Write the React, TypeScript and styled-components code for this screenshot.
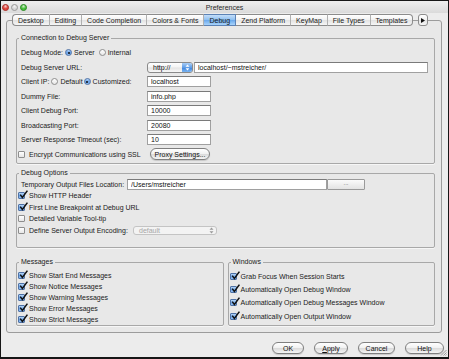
import React from "react";
import styled, { createGlobalStyle } from "styled-components";

const GlobalStyle = createGlobalStyle`
  * { box-sizing: border-box; }
  html, body { margin: 0; padding: 0; background: #ececec; }
  body {
    font-family: "Liberation Sans", Arial, sans-serif;
    font-size: 7px;
    color: #1a1a1a;
  }
`;

const Window = styled.div`
  position: relative;
  width: 449px;
  height: 359px;
  display: flex;
  flex-direction: column;
  background: #ececec;
  border: 1px solid #161616;
  border-bottom-width: 2px;
  overflow: hidden;
`;

const TitleBar = styled.div`
  flex: none;
  height: 12px;
  display: grid;
  grid-template-columns: 1fr auto 1fr;
  align-items: center;
  background: linear-gradient(#eeeeee, #dadada);
  color: #2a2a2a;
`;

const Lights = styled.div`
  display: flex;
  gap: 2px;
  padding-left: 1px;
`;

const Light = styled.span<{ $color: string; $edge: string }>`
  width: 7px;
  height: 7px;
  border-radius: 50%;
  border: 1px solid ${(p) => p.$edge};
  background: radial-gradient(circle at 50% 25%, rgba(255, 255, 255, 0.75) 0, rgba(255, 255, 255, 0) 55%),
    ${(p) => p.$color};
`;

const Body = styled.div`
  flex: 1;
  display: flex;
  flex-direction: column;
  padding: 1px 6px 0 5px;
`;

const TabStrip = styled.div`
  position: relative;
  z-index: 1;
  display: flex;
  align-items: center;
  height: 12px;
  margin-left: 6px;
  margin-bottom: -6px;
`;

const Tab = styled.div<{ $active?: boolean; $first?: boolean; $last?: boolean }>`
  height: 12px;
  display: flex;
  align-items: center;
  padding: 0 5px;
  white-space: nowrap;
  border-top: 1px solid #8c8c8c;
  border-bottom: 1px solid #8c8c8c;
  border-left: ${(p) => (p.$first ? "1px solid #8c8c8c" : "none")};
  border-right: 1px solid ${(p) => (p.$last ? "#8c8c8c" : "#b0b0b0")};
  border-radius: ${(p) => (p.$first ? "4px 0 0 4px" : p.$last ? "0 4px 4px 0" : "0")};
  background: ${(p) =>
    p.$active
      ? "linear-gradient(#c4def8, #8fc0f2 48%, #6aa8ec 52%, #a8d3fb)"
      : "linear-gradient(#ffffff, #f2f2f2 48%, #e2e2e2 52%, #f6f6f6)"};
  ${(p) => p.$active && "border-color: #5c82b5;"}
`;

const MoreTab = styled.div`
  margin-left: 5px;
  width: 10px;
  height: 12px;
  display: flex;
  align-items: center;
  justify-content: center;
  border: 1px solid #8c8c8c;
  border-radius: 3px;
  background: linear-gradient(#ffffff, #f2f2f2 48%, #e2e2e2 52%, #f6f6f6);
`;

const Pane = styled.div`
  display: flex;
  flex-direction: column;
  border: 1px solid #9c9c9c;
  border-radius: 3px;
  background: #e8e8e8;
  padding: 12px 6px 6px 9px;
`;

const Group = styled.fieldset<{ $pt: number; $pb: number; $mt?: number }>`
  margin: ${(p) => p.$mt ?? 0}px 0 0 0;
  min-width: 0;
  padding: ${(p) => p.$pt}px 6px ${(p) => p.$pb}px 4px;
  border: 1px solid #a8a8a8;
  border-radius: 2px;
  box-shadow: 0 1px 0 #f6f6f6;
`;

const Legend = styled.legend`
  padding: 0 2px;
  margin-left: -2px;
  height: 10px;
  line-height: 10px;
  color: #1a1a1a;
`;

const Row = styled.div<{ $h: number }>`
  display: flex;
  align-items: center;
  height: ${(p) => p.$h}px;
  white-space: nowrap;
`;

const CheckRow = styled(Row)`
  margin-left: -3px;
`;

const Label = styled.span<{ $w?: number }>`
  flex: none;
  display: flex;
  align-items: center;
  width: ${(p) => (p.$w ? `${p.$w}px` : "auto")};
`;

const Choice = styled.span<{ $ml?: number }>`
  display: flex;
  align-items: center;
  gap: 2px;
  margin-left: ${(p) => p.$ml ?? 2}px;
`;

const Field = styled.input<{ $w: number; $ml?: number }>`
  width: ${(p) => p.$w}px;
  height: 11px;
  margin: 0 0 0 ${(p) => p.$ml ?? 0}px;
  padding: 0 0 0 3px;
  border: 1px solid #a0a0a0;
  border-top-color: #7a7a7a;
  background: #fff;
  font: inherit;
  color: #111;
  outline: none;
`;

const Popup = styled.div<{ $w: number; $disabled?: boolean }>`
  width: ${(p) => p.$w}px;
  height: ${(p) => (p.$disabled ? 9 : 11)}px;
  display: flex;
  align-items: stretch;
  border: 1px solid ${(p) => (p.$disabled ? "#c4c4c4" : "#8a8a8a")};
  border-radius: 3px;
  overflow: hidden;
  color: ${(p) => (p.$disabled ? "#a6a6a6" : "#111")};
  background: ${(p) =>
    p.$disabled ? "#f3f3f3" : "linear-gradient(#ffffff, #f3f3f3 48%, #e4e4e4 52%, #f7f7f7)"};
`;

const PopupText = styled.span`
  flex: 1;
  display: flex;
  align-items: center;
  padding-left: 5px;
`;

const PopupArrows = styled.span<{ $disabled?: boolean }>`
  flex: none;
  width: 10px;
  display: flex;
  align-items: center;
  justify-content: center;
  background: ${(p) =>
    p.$disabled ? "transparent" : "linear-gradient(#a9cdf6, #5f9de6 50%, #3d82dc 52%, #7cb6f2)"};
`;

const Box = styled.span<{ $on?: boolean }>`
  position: relative;
  flex: none;
  width: 7px;
  height: 7px;
  border-radius: 1px;
  border: 1px solid ${(p) => (p.$on ? "#4f72a6" : "#8e8e8e")};
  background: ${(p) =>
    p.$on ? "linear-gradient(#b7d6f7, #6fa7ea 55%, #8fbdf2)" : "linear-gradient(#ffffff, #e6e6e6)"};
`;

const Tick = styled.svg`
  position: absolute;
  left: 0;
  top: -3px;
  width: 9px;
  height: 9px;
  overflow: visible;
`;

const Dot = styled.span<{ $on?: boolean }>`
  flex: none;
  width: 7px;
  height: 7px;
  border-radius: 50%;
  display: flex;
  align-items: center;
  justify-content: center;
  border: 1px solid ${(p) => (p.$on ? "#4f72a6" : "#8e8e8e")};
  background: ${(p) =>
    p.$on ? "linear-gradient(#b7d6f7, #5f9be6 55%, #8fbdf2)" : "linear-gradient(#ffffff, #e6e6e6)"};
  &::after {
    content: "";
    display: ${(p) => (p.$on ? "block" : "none")};
    width: 2px;
    height: 2px;
    border-radius: 50%;
    background: #111;
  }
`;

const CheckItem = styled.span<{ $w?: number }>`
  flex: none;
  display: flex;
  align-items: center;
  gap: 4px;
  width: ${(p) => (p.$w ? `${p.$w}px` : "auto")};
`;

const AquaButton = styled.button<{ $w: number; $ml?: number }>`
  flex: none;
  width: ${(p) => p.$w}px;
  height: 12px;
  margin: 0 0 0 ${(p) => p.$ml ?? 0}px;
  padding: 0;
  display: flex;
  align-items: center;
  justify-content: center;
  border: 1px solid #7f7f7f;
  border-radius: 6px;
  background: linear-gradient(#ffffff, #f2f2f2 45%, #dcdcdc 55%, #f5f5f5);
  box-shadow: 0 1px 1px rgba(0, 0, 0, 0.15);
  font: inherit;
  color: #111;
`;

const SquareButton = styled.button<{ $w: number }>`
  flex: none;
  width: ${(p) => p.$w}px;
  height: 11px;
  margin: 0;
  padding: 0 0 2px;
  border: 1px solid #9a9a9a;
  border-radius: 1px;
  background: linear-gradient(#fbfbfb, #e3e3e3);
  font: inherit;
  font-size: 6px;
  color: #555;
`;

const Bottom = styled.div`
  margin-top: 9px;
  display: grid;
  grid-template-columns: 1fr 1fr;
  gap: 4px;
`;

const ButtonBar = styled.div`
  display: flex;
  justify-content: flex-end;
  gap: 10px;
  margin: 9px -2px 0 0;
`;

const Grip = styled.svg`
  position: absolute;
  right: 1px;
  bottom: 1px;
  width: 7px;
  height: 7px;
`;

const Mnemonic = styled.span`
  text-decoration: underline;
`;

const Check = ({ on }: { on?: boolean }) => (
  <Box $on={on}>
    {on && (
      <Tick viewBox="0 0 9 9">
        <path d="M1.2 4.6 L3.4 7.4 L8.4 0.6" fill="none" stroke="#111" strokeWidth="1.5" />
      </Tick>
    )}
  </Box>
);

const UpDown = ({ color }: { color: string }) => (
  <svg width="5" height="7" viewBox="0 0 5 7">
    <path d="M2.5 0.5 L4.5 2.8 L0.5 2.8 Z M2.5 6.5 L4.5 4.2 L0.5 4.2 Z" fill={color} />
  </svg>
);

const tabs = [
  "Desktop",
  "Editing",
  "Code Completion",
  "Colors & Fonts",
  "Debug",
  "Zend Platform",
  "KeyMap",
  "File Types",
  "Templates",
];

const fields = [
  ["Dummy File:", "info.php"],
  ["Client Debug Port:", "10000"],
  ["Broadcasting Port:", "20080"],
  ["Server Response Timeout (sec):", "10"],
];

const messages = [
  "Show Start End Messages",
  "Show Notice Messages",
  "Show Warning Messages",
  "Show Error Messages",
  "Show Strict Messages",
];

const windows = [
  "Grab Focus When Session Starts",
  "Automatically Open Debug Window",
  "Automatically Open Debug Messages Window",
  "Automatically Open Output Window",
];

export default function App() {
  return (
    <>
      <GlobalStyle />
      <Window>
        <TitleBar>
          <Lights>
            <Light $color="#e0443c" $edge="#a7302a" />
            <Light $color="#d6d6d6" $edge="#9a9a9a" />
            <Light $color="#48c03c" $edge="#2f8a28" />
          </Lights>
          <span>Preferences</span>
          <span />
        </TitleBar>

        <Body>
          <TabStrip>
            {tabs.map((t, i) => (
              <Tab key={t} $first={i === 0} $last={i === tabs.length - 1} $active={t === "Debug"}>
                {t}
              </Tab>
            ))}
            <MoreTab>
              <svg width="4" height="5" viewBox="0 0 4 5">
                <path d="M0 0 L4 2.5 L0 5 Z" fill="#111" />
              </svg>
            </MoreTab>
          </TabStrip>

          <Pane>
            <Group $pt={2.5} $pb={1.5}>
              <Legend>Connection to Debug Server</Legend>
              <Row $h={14.5}>
                <Label>Debug Mode:</Label>
                <Choice>
                  <Dot $on />
                  Server
                </Choice>
                <Choice $ml={4}>
                  <Dot />
                  Internal
                </Choice>
              </Row>
              <Row $h={14.5}>
                <Label $w={126}>Debug Server URL:</Label>
                <Popup $w={46}>
                  <PopupText>http://</PopupText>
                  <PopupArrows>
                    <UpDown color="#ffffff" />
                  </PopupArrows>
                </Popup>
                <Field $w={234} $ml={1} readOnly value="localhost/~mstreicher/" />
              </Row>
              <Row $h={14.5}>
                <Label $w={126}>
                  Client IP:
                  <Choice>
                    <Dot />
                    Default
                  </Choice>
                  <Choice $ml={1}>
                    <Dot $on />
                    Customized:
                  </Choice>
                </Label>
                <Field $w={64} readOnly value="localhost" />
              </Row>
              {fields.map(([label, value]) => (
                <Row $h={14.5} key={label}>
                  <Label $w={126}>{label}</Label>
                  <Field $w={64} readOnly value={value} />
                </Row>
              ))}
              <CheckRow $h={14.5}>
                <CheckItem $w={129}>
                  <Check />
                  Encrypt Communications using SSL
                </CheckItem>
                <AquaButton $w={60} $ml={3}>
                  Proxy Settings...
                </AquaButton>
              </CheckRow>
            </Group>

            <Group $pt={0.5} $pb={11} $mt={4}>
              <Legend>Debug Options</Legend>
              <Row $h={11.5}>
                <Label $w={106}>Temporary Output Files Location:</Label>
                <Field $w={200} readOnly value="/Users/mstreicher" />
                <SquareButton $w={38}>...</SquareButton>
              </Row>
              <CheckRow $h={11.5}>
                <CheckItem>
                  <Check on />
                  Show HTTP Header
                </CheckItem>
              </CheckRow>
              <CheckRow $h={11.5}>
                <CheckItem>
                  <Check on />
                  First Line Breakpoint at Debug URL
                </CheckItem>
              </CheckRow>
              <CheckRow $h={11.5}>
                <CheckItem>
                  <Check />
                  Detailed Variable Tool-tip
                </CheckItem>
              </CheckRow>
              <CheckRow $h={11.5}>
                <CheckItem $w={115}>
                  <Check />
                  Define Server Output Encoding:
                </CheckItem>
                <Popup $w={84} $disabled>
                  <PopupText>default</PopupText>
                  <PopupArrows $disabled>
                    <UpDown color="#9a9a9a" />
                  </PopupArrows>
                </Popup>
              </CheckRow>
            </Group>

            <Bottom>
              <Group $pt={2.5} $pb={0.5}>
                <Legend>Messages</Legend>
                {messages.map((m) => (
                  <CheckRow $h={11} key={m}>
                    <CheckItem>
                      <Check on />
                      {m}
                    </CheckItem>
                  </CheckRow>
                ))}
              </Group>
              <Group $pt={2.5} $pb={0.5}>
                <Legend>Windows</Legend>
                {windows.map((w) => (
                  <CheckRow $h={13.3} key={w}>
                    <CheckItem>
                      <Check on />
                      {w}
                    </CheckItem>
                  </CheckRow>
                ))}
              </Group>
            </Bottom>
          </Pane>

          <ButtonBar>
            <AquaButton $w={32}>OK</AquaButton>
            <AquaButton $w={34}>
              <Mnemonic>A</Mnemonic>pply
            </AquaButton>
            <AquaButton $w={37}>Cancel</AquaButton>
            <AquaButton $w={39}>Help</AquaButton>
          </ButtonBar>
        </Body>

        <Grip viewBox="0 0 7 7">
          <path d="M6.5 1 L1 6.5 M6.5 3.5 L3.5 6.5 M6.5 5.5 L5.5 6.5" stroke="#8a8a8a" strokeWidth="0.8" />
        </Grip>
      </Window>
    </>
  );
}
